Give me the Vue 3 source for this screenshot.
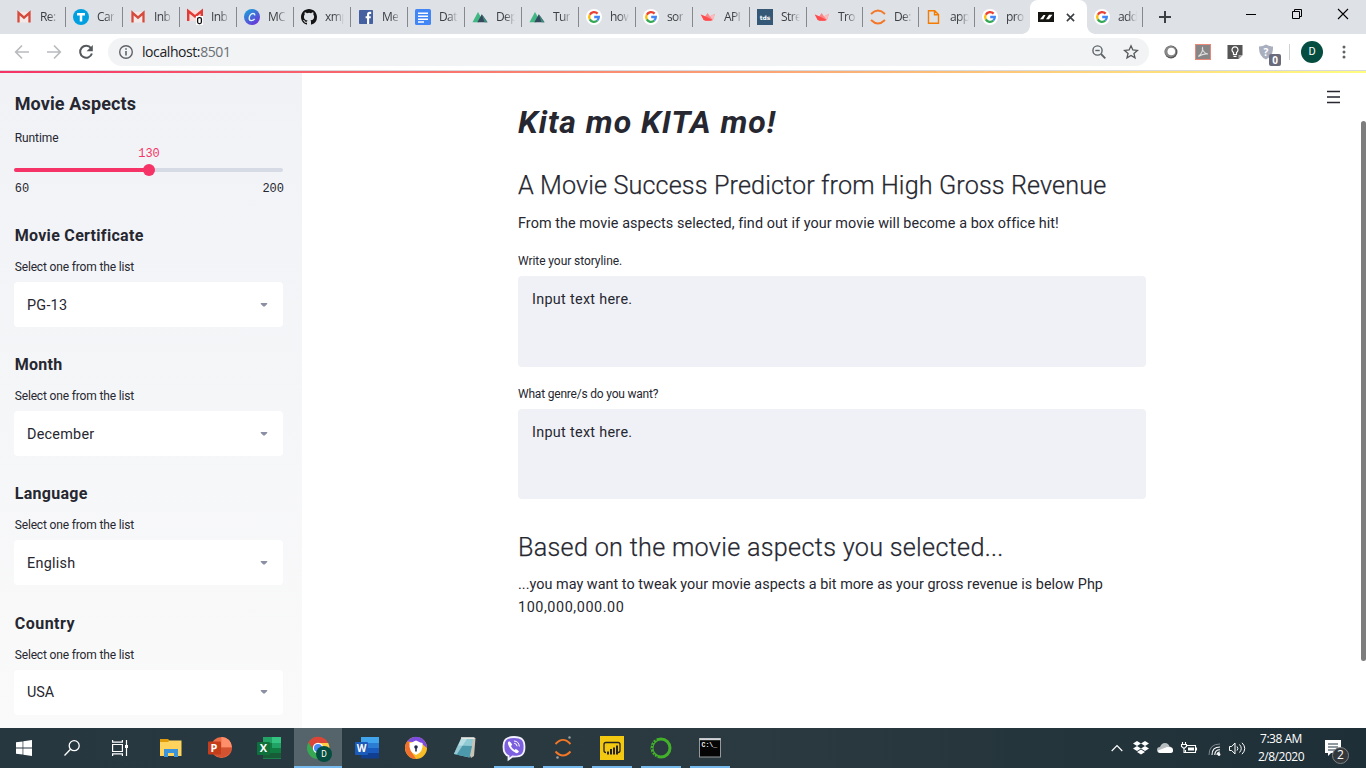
<script setup>
const gmail = '<rect x="1.500" y="3" width="13" height="10.500" fill="#f3e9e7"/><path d="M2.500 13.500V3.800L8 8.600l5.500-4.800v9.700" fill="none" stroke="#d64a3c" stroke-width="2.300"/>'
const google = '<circle cx="8" cy="8" r="8" fill="#fff"/><g fill="none" stroke-width="2.300"><path d="M11.600 4.600A4.800 4.800 0 0 0 3.800 5.700" stroke="#ea4335"/><path d="M3.800 5.700a4.800 4.800 0 0 0 0 4.700" stroke="#fbbc05"/><path d="M3.800 10.400a4.800 4.800 0 0 0 7.500 1.100" stroke="#34a853"/><path d="M11.300 11.500A4.800 4.800 0 0 0 12.800 8H8.200" stroke="#4285f4"/></g>'
const peaks = '<path d="M0.500 13.200L6 3l3.600 6.500-2.300 3.700z" fill="#41b883"/><path d="M5.300 13.200L9.800 5.200l5.700 8z" fill="#35495e"/><path d="M9.800 5.200l5.700 8h-3z" fill="#3c8a78"/>'
const crown = '<path d="M.8 5.500l4.200 2L7.600 4l2.300 3.300 5.200-2.500-2.200 6.200q-4.800 1.700-9.200 0z" fill="#f9888b"/><path d="M.8 5.500l6 2.400 6.100 3.100q-5 1.700-9.200 0z" fill="#ff4b4b"/><path d="M9.900 7.300l5.200-2.500-2.200 6.200z" fill="#fbbcbd"/>'
const jupyter = '<g fill="none" stroke="#f37726" stroke-width="1.900"><path d="M1 5Q8-1.800 15 5"/><path d="M1 11Q8 17.800 15 11"/></g>'

const tabs = [
  { label: 'Re:', w: 57, icon: gmail },
  { label: 'Car', w: 57, icon: '<circle cx="8" cy="8" r="8" fill="#009fdf"/><path d="M4 5.300h8M8 5v7.500" stroke="#fff" stroke-width="2.500"/>' },
  { label: 'Inb', w: 57, icon: gmail },
  { label: 'Inb', w: 57, icon: '<rect y="1" width="16" height="11" fill="#f6dedd"/><path d="M1.200 12V2L8 7.500 14.800 2v6" fill="none" stroke="#e33b35" stroke-width="2.400"/><rect x="9" y="7" width="7" height="9" fill="#fff"/><rect x="10.600" y="8.600" width="3.800" height="6" rx="1.500" fill="none" stroke="#111" stroke-width="1.300"/>' },
  { label: 'MC', w: 57, icon: '<defs><linearGradient id="cg" x1="0" y1="0" x2=".7" y2="1"><stop stop-color="#16a9d9"/><stop offset="1" stop-color="#6a35d9"/></linearGradient></defs><circle cx="8" cy="8" r="8" fill="url(#cg)"/><path d="M10.900 6.300Q10.700 4.500 9 4.500C6.700 4.500 5.200 7.300 5.200 9.300c0 2.900 3.400 3.100 5.500.6" fill="none" stroke="#dff4ff" stroke-width="1.400"/>' },
  { label: 'xmp', w: 57, icon: '<path fill="#141414" d="M8 0C3.580 0 0 3.580 0 8c0 3.540 2.290 6.530 5.470 7.590.4.070.55-.17.55-.38 0-.19-.01-.82-.01-1.490-2.010.37-2.530-.49-2.690-.94-.09-.23-.48-.94-.82-1.130-.28-.15-.68-.52-.01-.53.63-.01 1.080.58 1.230.82.72 1.210 1.870.87 2.330.66.07-.52.28-.87.51-1.070-1.780-.2-3.640-.89-3.640-3.950 0-.87.31-1.590.82-2.150-.08-.2-.36-1.020.08-2.120 0 0 .67-.21 2.200.82a7.600 7.600 0 0 1 4 0c1.530-1.040 2.200-.82 2.200-.82.44 1.100.16 1.920.08 2.120.51.56.82 1.270.82 2.150 0 3.070-1.870 3.750-3.650 3.950.29.25.54.73.54 1.480 0 1.070-.01 1.930-.01 2.200 0 .21.15.46.55.38A8 8 0 0 0 16 8c0-4.420-3.580-8-8-8z"/>' },
  { label: 'Me', w: 57, icon: '<rect x="1" y="1" width="14" height="14" rx=".8" fill="#4460a0"/><path d="M13.200 3.900h-1.600q-1.500 0-1.500 1.500V15M7.600 8.300h5.200" fill="none" stroke="#fff" stroke-width="2.100"/>' },
  { label: 'Dat', w: 57, icon: '<rect width="16" height="16" rx="1.600" fill="#4285f4"/><path d="M3 4.300h10M3 7.300h10M3 10.200h10M3 13h6" stroke="#fff" stroke-width="1.500"/>' },
  { label: 'Dep', w: 57, icon: peaks },
  { label: 'Tur', w: 57, icon: peaks },
  { label: 'how', w: 57, icon: google },
  { label: 'sor', w: 57, icon: google },
  { label: 'API', w: 57, icon: crown },
  { label: 'Stre', w: 57, icon: '<rect width="16" height="16" fill="#355876"/><text x="8" y="10.800" text-anchor="middle" font-family="DejaVu Sans" font-weight="bold" font-size="6" fill="#fff">tds</text>' },
  { label: 'Tro', w: 56, icon: crown },
  { label: 'De:', w: 56, icon: jupyter },
  { label: 'app', w: 56, icon: '<path d="M3 1.700h6.200L13 5.500v8.800H3zM9 1.700v4h4" fill="none" stroke="#f57c00" stroke-width="1.400" transform="translate(-.5 0)"/>' },
  { label: 'pro', w: 56, icon: google },
  { label: '', w: 57, active: true, icon: '<rect y="3" width="16" height="10" fill="#151511"/><path d="M2 10.300L5.500 6h2L5.300 10.300zM8 10.300L11 5.800h3.500L11 10.300z" fill="#fff"/>' },
  { label: 'add', w: 55, icon: google },
]

const selects = [
  { title: 'Movie Certificate', value: 'PG-13', cls: 'certificate' },
  { title: 'Month', value: 'December', cls: 'month' },
  { title: 'Language', value: 'English', cls: 'language' },
  { title: 'Country', value: 'USA', cls: 'country' },
]

const apps = [
  { name: 'files', icon: '<path d="M1 3h8l2 2h11v4H1z" fill="#e09c0a"/><path d="M1 6h8l1.500-1.500H22.500V20H1z" fill="#ffd35c"/><path d="M5 21v-8h14v8h-4v-4H9v4z" fill="#3b93d9"/>' },
  { name: 'powerpoint', icon: '<circle cx="13.500" cy="11.500" r="10.500" fill="#ed6c47"/><path d="M13.500 1A10.500 10.500 0 0 1 24 11.500H13.500z" fill="#ff8f6b"/><path d="M3 11.500h21A10.500 10.500 0 0 1 3.500 14z" fill="#d35230"/><rect y="5.500" width="13" height="13" rx="1" fill="#c43e1c"/><text x="6" y="15.800" text-anchor="middle" font-family="Open Sans" font-weight="bold" font-size="11" fill="#fff">P</text>' },
  { name: 'excel', icon: '<path d="M6 1h18v22H6z" fill="#21a366"/><path d="M15 1h9v6h-9z" fill="#33c481"/><path d="M6 7h9v10H6z" fill="#107c41"/><path d="M6 17h18v5.500H6z" fill="#185c37"/><path d="M15 12h9v5h-9z" fill="#107c41"/><rect y="6" width="13" height="13" rx="1" fill="#0e703b"/><text x="6.500" y="16.300" text-anchor="middle" font-family="Open Sans" font-weight="bold" font-size="11" fill="#fff">X</text>' },
  { name: 'chrome', active: true, running: true, icon: '<circle cx="12" cy="12" r="11" fill="#36a852"/><path d="M2.500 6.500A11 11 0 0 1 22 7H12a5 5 0 0 0-4.500 7z" fill="#dc4437"/><path d="M12 7h10.200A11 11 0 0 1 12 23l4.500-9z" fill="#ffcd46"/><circle cx="12" cy="12" r="5.200" fill="#fff"/><circle cx="12" cy="12" r="4" fill="#4a8af4"/><circle cx="18" cy="18" r="8" fill="#044d40"/><text x="18" y="21" text-anchor="middle" font-family="Roboto" font-size="8.500" fill="#fff">D</text>' },
  { name: 'word', icon: '<path d="M6 1h18v6H6z" fill="#41a5ee"/><path d="M6 7h18v5H6z" fill="#2b7cd3"/><path d="M6 12h18v5H6z" fill="#185abd"/><path d="M6 17h18v5.500H6z" fill="#103f91"/><rect y="6" width="13" height="13" rx="1" fill="#1b5bbb"/><text x="6.500" y="16" text-anchor="middle" font-family="Open Sans" font-weight="bold" font-size="10" fill="#fff">W</text>' },
  { name: 'lock', icon: '<circle cx="12" cy="12" r="11" fill="#f8bd26"/><path d="M3 5.500A11 11 0 0 1 23 12l-6-5z" fill="#7d4ce1"/><path d="M3 5.500Q-1.500 12 4 19.500q4 4 8 3.300L8 17 6 7z" fill="#f16f2c"/><path d="M12 4.500Q17 7 18.500 7q1 9-6.500 12Q4.500 16 5.500 7 7 7 12 4.500z" fill="#fff"/><circle cx="12" cy="11" r="1.800" fill="#202c50"/><path d="M12 11v4.500" stroke="#202c50" stroke-width="1.600"/>' },
  { name: 'notepad', icon: '<g transform="translate(-1 0)"><path d="M10 2h13.500l-1.500 18-3 2z" fill="#c6c4b5"/><path d="M9 2.500L21 3l-3.500 18.500L2 18z" fill="#8fc9d3"/><path d="M5.500 9.500L20 10l-2.500 11.500L2 18z" fill="#4b99aa"/><path d="M9 2h13.500" stroke="#f6f6ef" stroke-width="1.500"/><path d="M9 3l6 0L5 18H2z" fill="#d8eef0" opacity=".55"/></g>' },
  { name: 'viber', running: true, icon: '<path d="M12 1C4 1 1.500 4 1.500 11c0 5 1.500 7.800 5 9v3.500L10.500 20.500C20 21 22.500 18 22.500 11S20 1 12 1z" fill="#7c60df" stroke="#f4f1ff" stroke-width="1.800"/><path d="M7.200 5.300q-1.700.7-1.200 2.600 1.800 6 8 9.200 1.800.5 3-1.600-1.300-1.700-3.200-2.400l-1.300 1Q9.600 12.500 9 10l1.200-1.200Q9.400 6.600 7.200 5.300z" fill="#fff"/><path d="M12 5q5 .3 5.300 5.500M12.200 7.300q2.600.2 2.900 3" stroke="#fff" fill="none"/>' },
  { name: 'jupyter', running: true, icon: '<g fill="none" stroke="#f37726" stroke-width="1.900"><path d="M4.500 8Q12-.2 19.500 8"/><path d="M4.500 15.500Q12 23.500 19.500 15.500"/></g><g fill="#9ba0a3"><circle cx="18.500" cy="1.500" r="1.200"/><circle cx="6.500" cy="21.500" r="1.300"/></g>' },
  { name: 'powerbi', running: true, icon: '<rect width="24" height="24" fill="#f2c811"/><rect x="4" y="6.500" width="16" height="10" rx="2" fill="none" stroke="#252420" stroke-width="1.300"/><path d="M6 13h12v6H6z" fill="#f2c811"/><path d="M8 15.500v3M11 13v5.500M14 11.500v7M17 9.500v9" stroke="#252420" stroke-width="2"/>' },
  { name: 'anaconda', running: true, icon: '<circle cx="12" cy="12" r="9" fill="none" stroke="#43b02a" stroke-width="3"/><path d="M7.500 3.500Q2 7 3 14t7.500 7.500" fill="none" stroke="#263841" stroke-width="1.600" stroke-dasharray="1.200 2.200"/>' },
  { name: 'terminal', running: true, icon: '<rect x="1.500" y="2.500" width="21" height="18.500" fill="#050505" stroke="#96999b"/><path d="M1.500 3.200h21" stroke="#d0d4d6" stroke-width="2"/><text x="3.500" y="11" font-family="Liberation Mono" font-weight="bold" font-size="6.500" fill="#eee">C:\\_</text>' },
]
</script>

<template>
  <div class="screen">
    <header class="tabstrip">
      <div class="tabs">
        <div v-for="(tab, i) in tabs" :key="i" class="tab" :class="{ active: tab.active, before: tabs[i + 1]?.active }" :style="{ width: tab.w + 'px' }">
          <svg class="favicon" viewBox="0 0 16 16" v-html="tab.icon"></svg>
          <span v-if="!tab.active" class="tab-label">{{ tab.label }}</span>
          <svg v-else class="tab-close" viewBox="0 0 10 10"><path d="M1 1l8 8M9 1L1 9" stroke="#3c4043" stroke-width="1.800" /></svg>
        </div>
      </div>
      <svg class="new-tab" viewBox="0 0 12 12"><path d="M6 0v12M0 6h12" stroke="#3c4043" stroke-width="2" /></svg>
      <div class="window-buttons">
        <svg viewBox="0 0 12 12"><path d="M1 6.500h10" stroke="#000" /></svg>
        <svg viewBox="0 0 12 12" fill="none" stroke="#000"><path d="M1.500 3.500h7v7h-7zM3.500 3.500v-2h7v7h-2" /></svg>
        <svg viewBox="0 0 12 12"><path d="M1 1l10 10M11 1L1 11" stroke="#000" stroke-width="1.100" /></svg>
      </div>
    </header>

    <div class="toolbar">
      <svg class="nav" viewBox="0 0 16 16" fill="none" stroke="#b9bbbe" stroke-width="1.700"><path d="M15 8H2M8 1.500L1.700 8 8 14.500" /></svg>
      <svg class="nav" viewBox="0 0 16 16" fill="none" stroke="#b9bbbe" stroke-width="1.700"><path d="M1 8h13M8 1.500L14.300 8 8 14.500" /></svg>
      <svg class="nav" viewBox="0 0 16 16"><path d="M13 4.200A6 6 0 1 0 13.900 9.500" fill="none" stroke="#55585c" stroke-width="2" /><path d="M14.800 1v6.200H8.600z" fill="#55585c" /></svg>
      <div class="omnibox">
        <svg class="info" viewBox="0 0 16 16"><circle cx="8" cy="8" r="6.300" fill="none" stroke="#5f6368" stroke-width="1.400" /><path d="M8 7v4.500M8 4.300v1.500" stroke="#5f6368" stroke-width="1.600" /></svg>
        <span class="url">localhost:<span class="port">8501</span></span>
        <svg class="lens" viewBox="0 0 16 16" fill="none" stroke="#5f6368" stroke-width="1.400"><circle cx="6.500" cy="6.500" r="4.600" /><path d="M10 10l4.300 4.300" stroke-width="1.800" /><path d="M4.300 6.500h4.400" /></svg>
        <svg class="star" viewBox="0 0 16 16"><path d="M8 1.800l1.850 4.200 4.550.4-3.450 3 1.050 4.500L8 11.500l-4 2.400 1.050-4.500-3.450-3 4.550-.4z" fill="none" stroke="#55585c" stroke-width="1.300" /></svg>
      </div>
      <div class="extensions">
        <svg class="ext ring" viewBox="0 0 16 16"><circle cx="8" cy="8" r="6.500" fill="#555" /><circle cx="7.500" cy="7.500" r="5.700" fill="#888" /><circle cx="8.300" cy="7.500" r="3.800" fill="#fff" /></svg>
        <svg class="ext pdf" viewBox="0 0 16 16"><rect x=".5" y=".5" width="15" height="15" fill="#878586" stroke="#e98876" /><path d="M3.300 12.500C6 10.500 8.500 6 7.500 3.500c-.8 1 1 6 5.500 6.500-3-.5-6.500.5-9.700 2.500z" fill="none" stroke="#ddd" stroke-width="1.100" /></svg>
        <svg class="ext bulb" viewBox="0 0 16 16"><path d="M.5 1h15v10l-4 4H.5z" fill="#555" /><path d="M11.500 15v-4h4z" fill="#aaa" /><path d="M6.500 10.500v-2a3 3 0 1 1 3 0v2zM6.500 12.300h3" fill="none" stroke="#fff" stroke-width="1.200" /></svg>
        <div class="ext shield">
          <svg viewBox="0 0 16 16"><path d="M1 2.500Q5 2.500 8 .5q3 2 7 2Q15.500 12 8 15.500.5 12 1 2.500z" fill="#a9afbf" /><text x="8" y="11.500" text-anchor="middle" font-family="Open Sans" font-weight="bold" font-size="10" fill="#fff">?</text></svg>
          <span class="badge">0</span>
        </div>
      </div>
      <span class="rule"></span>
      <span class="avatar">D</span>
      <svg class="kebab" viewBox="0 0 4 14" fill="#5f6368"><circle cx="2" cy="2" r="1.500" /><circle cx="2" cy="7" r="1.500" /><circle cx="2" cy="12" r="1.500" /></svg>
    </div>

    <div class="page">
      <aside class="sidebar">
        <h2>Movie Aspects</h2>
        <div class="label runtime">Runtime</div>
        <div class="slider-value">130</div>
        <div class="track"><span class="fill"></span><span class="thumb"></span></div>
        <div class="range"><span>60</span><span>200</span></div>
        <section v-for="s in selects" :key="s.title" :class="s.cls">
          <h3>{{ s.title }}</h3>
          <div class="label">Select one from the list</div>
          <div class="select">
            <span class="value">{{ s.value }}</span>
            <svg viewBox="0 0 8 4"><path d="M.8 0h6.400v1L4.700 3.500H3.300L.8 1z" fill="#8b8fa3" /></svg>
          </div>
        </section>
      </aside>
      <main class="main">
        <h1>Kita mo KITA mo!</h1>
        <h2 class="predictor">A Movie Success Predictor from High Gross Revenue</h2>
        <p class="intro">From the movie aspects selected, find out if your movie will become a box office hit!</p>
        <div class="label story">Write your storyline.</div>
        <div class="textarea">Input text here.</div>
        <div class="label genre">What genre/s do you want?</div>
        <div class="textarea">Input text here.</div>
        <h2 class="based">Based on the movie aspects you selected...</h2>
        <p class="result">...you may want to tweak your movie aspects a bit more as your gross revenue is below Php<br /><span class="amount">100,000,000.00</span></p>
      </main>
      <svg class="menu" viewBox="0 0 14 12"><path d="M0 .5h13M0 6h13M0 11.500h13" stroke="#262730" stroke-width="1.300" /></svg>
      <span class="scrollbar"></span>
    </div>

    <footer class="taskbar">
      <div class="system-slot"><svg viewBox="0 0 16 16" fill="#fff"><path d="M0 2.300l6.600-.9v6.200H0zM7.300 1.300L16 0v7.600H7.300zM0 8.400h6.600v6.200L0 13.700zM7.300 8.400H16V16l-8.700-1.300z" /></svg></div>
      <div class="system-slot"><svg viewBox="0 0 16 16" fill="none" stroke="#fff" stroke-width="1.300"><circle cx="10.200" cy="5.700" r="5" /><path d="M6.500 9.300L.5 15.500" /></svg></div>
      <div class="system-slot"><svg viewBox="0 0 16 16" fill="none" stroke="#fff" stroke-width="1.200"><path d="M.6 0v2.200h9.800V0M.6 16v-2.200h9.800V16M.6 4.500h9.800v7H.6zM14.500 0v16" /><path d="M13 5h3v3h-3z" fill="#fff" stroke="none" /></svg></div>
      <div class="apps">
        <div v-for="app in apps" :key="app.name" class="app" :class="{ running: app.running, current: app.active }">
          <svg viewBox="0 0 24 24" v-html="app.icon"></svg>
        </div>
      </div>
      <div class="tray">
        <svg class="chevron" viewBox="0 0 12 8"><path d="M.7 7L6 1.500 11.300 7" fill="none" stroke="#fff" stroke-width="1.200" /></svg>
        <svg class="dropbox" viewBox="0 0 16 14" fill="#fff"><path d="M4 0l4 2.500L4 5 0 2.500zM12 0l4 2.500L12 5 8 2.500zM4 5l4 2.500L4 10 0 7.500zM12 5l4 2.500-4 2.500-4-2.500zM8 8.500l4 2.500-4 2.500L4 11z" /></svg>
        <svg class="cloud" viewBox="0 0 16 10"><path d="M3.500 10Q0 10 0 7t3-3Q4.500 0 8 0t4.500 3.500Q16 4 16 7t-3 3z" fill="#b8bdc0" /><path d="M3.500 10Q1 10 1 7.500L10 4q6-.5 6 3.500 0 2.500-3 2.500z" fill="#fff" /></svg>
        <svg class="battery" viewBox="0 0 16 12" fill="none" stroke="#fff" stroke-width="1.100"><path d="M6 3.500h8.500v7H4.500V8M15.500 5.500v3M1.500 0v2.500M4.500 0v2.500M.5 2.500h5v2L3 6.500.5 4.500zM3 6.500v4h2" /><path d="M7 5.500h6v3H7z" fill="#fff" stroke="none" /></svg>
        <svg class="wifi" viewBox="0 0 13 13" fill="none"><path d="M1 12Q1 1 12 1" stroke="#7e898e" /><path d="M4 12q0-8 8-8M6.800 12q0-5.200 5.200-5.200M9 12q0-3 3-3" stroke="#fff" stroke-width="1.100" /><circle cx="11" cy="11.500" r="1.400" fill="#fff" /></svg>
        <svg class="volume" viewBox="0 0 17 13" fill="none" stroke="#fff"><path d="M.5 4.500h2.200L6 1v11L2.700 8.500H.5zM8 4.500q1.800 2 0 4M10.500 2.500q3.500 4 0 8M13 .8q5.500 5.700 0 11.400" /></svg>
        <div class="clock"><span class="time">7:38 AM</span><span>2/8/2020</span></div>
        <div class="notes"><svg viewBox="0 0 16 16"><path d="M0 0h16v13H6l-3 3v-3H0z" fill="#fff" /><path d="M3 4h10M3 7h10M3 10h7" stroke="#23343c" stroke-width="1.100" /></svg><span class="count">2</span></div>
      </div>
    </footer>
  </div>
</template>

<style scoped>
* { box-sizing: border-box; }
svg { display: block; flex: none; overflow: visible; }
h1, h2, h3, p { margin: 0; white-space: nowrap; }
.screen { width: 1366px; height: 768px; display: flex; flex-direction: column; overflow: hidden; background: #fff; font-family: Roboto, sans-serif; color: #262730; }

.tabstrip { height: 34px; flex: none; display: flex; background: #dee1e6; padding-left: 8px; }
.tabs { display: flex; }
.tab { position: relative; height: 34px; display: flex; align-items: center; padding-left: 8px; }
.tab::after { content: ''; position: absolute; right: -1px; top: 7px; height: 20px; width: 1px; background: #85888c; }
.tab.active::after, .tab.before::after { display: none; }
.tab.active { background: #fff; border-radius: 8px 8px 0 0; }
.tab.active + .tab { padding-left: 7px; }
.tab.active::before { content: ''; position: absolute; left: -8px; right: -8px; bottom: 0; height: 8px; background: radial-gradient(circle at 0 0, transparent 7.500px, #fff 8px) left / 8px 8px no-repeat, radial-gradient(circle at 100% 0, transparent 7.500px, #fff 8px) right / 8px 8px no-repeat; }
.favicon { width: 16px; height: 16px; }
.tab-label { margin-left: 8px; white-space: nowrap; font: 12px/18px "Open Sans", sans-serif; letter-spacing: -0.600px; color: #3c4043; -webkit-mask-image: linear-gradient(90deg, #000 9px, transparent 19px); mask-image: linear-gradient(90deg, #000 9px, transparent 19px); }
.tab-close { width: 9px; height: 9px; margin-left: 12px; }
.new-tab { width: 12px; height: 12px; margin: 11px 0 0 17px; }
.window-buttons { display: flex; gap: 34px; margin: 8px 17px 0 auto; }
.window-buttons svg { width: 12px; height: 12px; }

.toolbar { height: 37px; flex: none; display: flex; align-items: center; padding-left: 14px; background: #fff; border-bottom: 1px solid #d7d9dd; }
.nav { width: 16px; height: 16px; margin-right: 16px; }
.omnibox { width: 1041px; height: 28px; margin-left: -2px; border-radius: 14px; background: #f1f3f4; display: flex; align-items: center; padding: 0 10px; }
.info { width: 16px; height: 16px; }
.url { margin-left: 8px; font: 14px/20px "Open Sans", sans-serif; letter-spacing: -0.420px; color: #202124; }
.port { color: #6b6f73; }
.lens { width: 16px; height: 16px; margin-left: auto; }
.star { width: 16px; height: 16px; margin: 0 0 0 16px; }
.extensions { display: flex; align-items: center; gap: 16px; margin-left: 14px; }
.ext { width: 16px; height: 16px; }
.shield { position: relative; margin-left: -1px; }
.badge { position: absolute; left: 11px; top: 10px; width: 12px; height: 12px; border-radius: 2px; background: #696a7b; color: #fff; font: bold 10px/12px "Open Sans", sans-serif; text-align: center; }
.rule { width: 1px; height: 16px; margin-left: 15px; background: #cfd1d4; }
.avatar { width: 22px; height: 22px; margin-left: 11px; border-radius: 50%; background: #044d40; color: #fff; font: 11px/22px Roboto, sans-serif; text-align: center; }
.kebab { width: 4px; height: 14px; margin-left: 19px; }

.page { position: relative; flex: 1; min-height: 0; display: flex; overflow: hidden; }
.page::before { content: ''; position: absolute; left: 0; right: 0; top: 0; height: 2px; background: linear-gradient(90deg, #f63366, #fffd80); }
.sidebar { width: 302px; flex: none; padding: 21px 19px 0 14px; background: linear-gradient(180deg, #f0f2f6, #fafafa); }
.sidebar h2, .sidebar h3, .sidebar .label { padding-left: 0.700px; }
.sidebar h2 { font-size: 18px; line-height: 24px; font-weight: 700; letter-spacing: 0.130px; }
.label { font-size: 12px; line-height: 20px; font-weight: 400; white-space: nowrap; }
.runtime { margin-top: 12px; letter-spacing: -0.080px; }
.slider-value { width: 270px; text-align: center; font: 12px/14px "Liberation Mono", monospace; color: #f63366; margin-top: -1px; }
.track { position: relative; height: 4px; margin-top: 7px; border-radius: 2px; background: #d5dae5; }
.fill { display: block; width: 50%; height: 4px; border-radius: 2px; background: #f63366; }
.thumb { position: absolute; left: 50%; top: -4px; width: 12px; height: 12px; margin-left: -6px; border-radius: 50%; background: #f63366; }
.range { display: flex; justify-content: space-between; margin: 9px -1px 0 0.700px; font: 12px/16px "Liberation Mono", monospace; }
section { margin-top: 28.240px; }
section.certificate { margin-top: 29px; }
h3 { font-size: 16px; line-height: 20px; font-weight: 700; letter-spacing: 0.300px; }
.country h3 { letter-spacing: 0.500px; }
section .label { margin-top: 11px; letter-spacing: -0.150px; }
.select { height: 45px; margin-top: 5px; padding: 0 15px 0 13px; background: #fff; border-radius: 4px; display: flex; justify-content: space-between; align-items: center; font-size: 14.400px; letter-spacing: 0.250px; }
.value { padding-top: 1px; }
.country .value { letter-spacing: -0.100px; }
.select svg { width: 8px; height: 4px; }

.main { width: 628px; margin-left: 216px; }
h1 { margin-top: 30px; font-size: 32px; line-height: 42px; font-style: italic; font-weight: 700; letter-spacing: 0.970px; }
.main h2 { font-size: 25.200px; line-height: 32px; font-weight: 300; -webkit-text-stroke: 0.250px #262730; }
.main h2.predictor { margin-top: 27px; letter-spacing: 0.120px; }
p { font-size: 14.400px; line-height: 23px; font-weight: 400; }
.intro { margin-top: 10px; letter-spacing: 0.070px; }
.story { margin-top: 16px; letter-spacing: -0.070px; }
.textarea { height: 90.500px; margin-top: 5px; padding: 12px 14px; border-radius: 4px; background: #f0f1f6; font-size: 14.400px; line-height: 23px; letter-spacing: 0.300px; }
.genre { margin-top: 17px; letter-spacing: -0.200px; }
.main h2.based { margin-top: 32.500px; letter-spacing: 0.300px; }
.result { margin-top: 9px; letter-spacing: 0.030px; }
.amount { letter-spacing: 0.570px; }
.menu { position: absolute; left: 1327px; top: 20px; width: 14px; height: 12px; }
.scrollbar { position: absolute; right: 0; top: 50px; width: 5px; height: 540px; border-radius: 3px; background: #7d7d7d; }

.taskbar { height: 40px; flex: none; display: flex; background: linear-gradient(90deg, #263740, #2b3a40 55%, #1e2f37); color: #fff; }
.system-slot { width: 48px; display: flex; align-items: center; justify-content: center; }
.system-slot svg { width: 16px; height: 16px; }
.apps { display: flex; gap: 1px; margin-left: 3px; }
.app { position: relative; width: 48px; display: flex; align-items: center; justify-content: center; }
.app svg { width: 24px; height: 24px; }
.current { background: #55636b; }
.running::after { content: ''; position: absolute; left: 4px; right: 4px; bottom: 0; height: 2px; background: #76b9ed; }
.current::after { left: 0; right: 0; }
.tray { display: flex; align-items: center; margin-left: auto; }
.chevron { width: 12px; height: 8px; }
.dropbox { width: 16px; height: 14px; margin-left: 10px; }
.cloud { width: 16px; height: 10px; margin-left: 8px; }
.battery { width: 16px; height: 12px; margin-left: 8px; }
.wifi { width: 13px; height: 13px; margin: 3px 0 0 11px; }
.volume { width: 17px; height: 13px; margin-left: 8px; }
.clock { width: 54px; margin-left: 8px; display: flex; flex-direction: column; align-items: center; font: 12px/18px "Open Sans", sans-serif; letter-spacing: -0.480px; white-space: nowrap; }
.notes { position: relative; margin: 0 25px 0 17px; }
.notes svg { width: 16px; height: 16px; }
.count { position: absolute; left: 7px; top: 7px; width: 17px; height: 17px; border: 1px solid #7f8487; border-radius: 50%; background: #34383b; font: 12px/14px "Open Sans", sans-serif; text-align: center; }
</style>

<style>
html, body { overflow: hidden; }
</style>
